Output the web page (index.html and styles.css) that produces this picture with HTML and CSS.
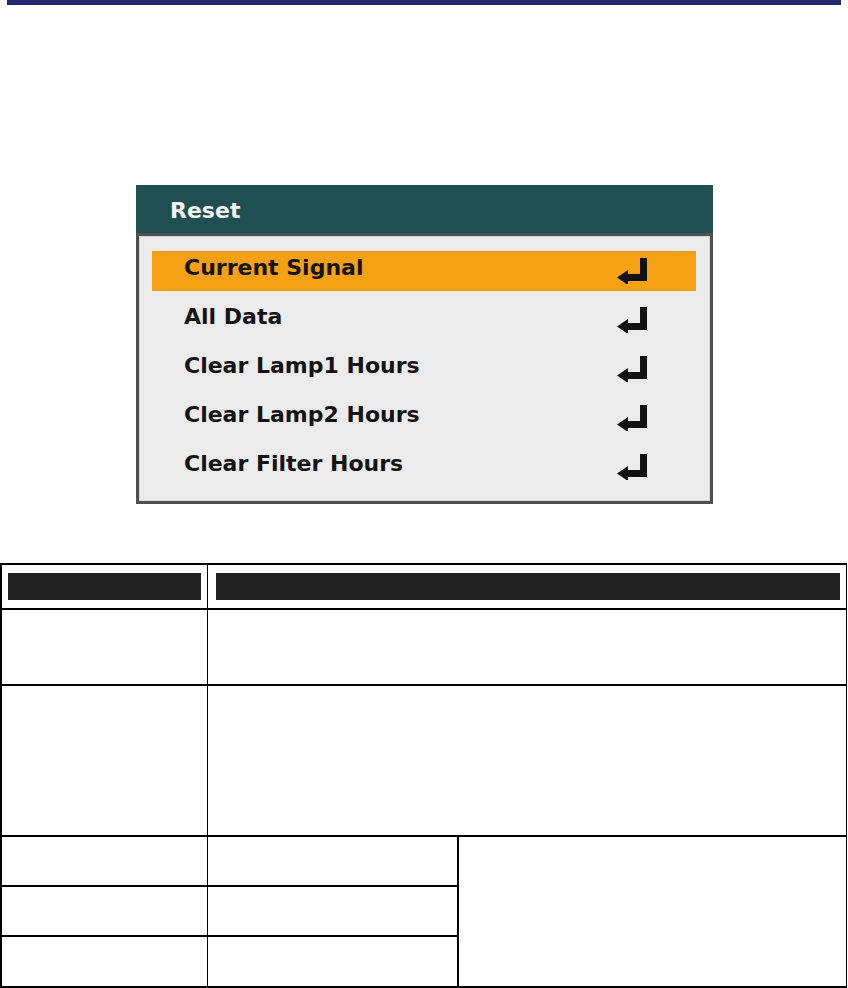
FILE: index.html
```html
<!DOCTYPE html>
<html>
<head>
<meta charset="utf-8">
<link rel="stylesheet" href="styles.css">
</head>
<body>
<div class="topbar"></div>
<div class="figure">
  <div class="osd">
    <div class="osd-head">Reset</div>
    <div class="osd-body">
      <div class="row active"><span class="label">Current Signal</span><svg class="enter" viewBox="0 0 30 26"><rect x="23" y="0" width="7" height="23"/><rect x="9" y="16" width="21" height="7"/><polygon points="0,19.5 11,12 11,27"/></svg></div>
      <div class="row"><span class="label">All Data</span><svg class="enter" viewBox="0 0 30 26"><rect x="23" y="0" width="7" height="23"/><rect x="9" y="16" width="21" height="7"/><polygon points="0,19.5 11,12 11,27"/></svg></div>
      <div class="row"><span class="label">Clear Lamp1 Hours</span><svg class="enter" viewBox="0 0 30 26"><rect x="23" y="0" width="7" height="23"/><rect x="9" y="16" width="21" height="7"/><polygon points="0,19.5 11,12 11,27"/></svg></div>
      <div class="row"><span class="label">Clear Lamp2 Hours</span><svg class="enter" viewBox="0 0 30 26"><rect x="23" y="0" width="7" height="23"/><rect x="9" y="16" width="21" height="7"/><polygon points="0,19.5 11,12 11,27"/></svg></div>
      <div class="row"><span class="label">Clear Filter Hours</span><svg class="enter" viewBox="0 0 30 26"><rect x="23" y="0" width="7" height="23"/><rect x="9" y="16" width="21" height="7"/><polygon points="0,19.5 11,12 11,27"/></svg></div>
    </div>
  </div>
</div>
<div class="tbl">
  <div class="cell c1 head"><div class="hbox"></div></div>
  <div class="cell span head head2"><div class="hbox"></div></div>
  <div class="cell c1"></div>
  <div class="cell span"></div>
  <div class="cell c1"></div>
  <div class="cell span"></div>
  <div class="cell c1"></div>
  <div class="cell c2"></div>
  <div class="cell c3"></div>
  <div class="cell c1"></div>
  <div class="cell c2"></div>
  <div class="cell c1"></div>
  <div class="cell c2"></div>
</div>
</body>
</html>
```
FILE: styles.css
```css
html, body {
  margin: 0;
  padding: 0;
  background: #ffffff;
}
body {
  font-family: "DejaVu Sans", "Liberation Sans", sans-serif;
}
.topbar {
  height: 5px;
  margin: 0 7px;
  background: #23286a;
}
.figure {
  padding: 180px 0 0 136px;
}
.osd {
  width: 577px;
}
.osd-head {
  background: #1f4f50;
  color: #f2f2f2;
  font-weight: bold;
  font-size: 22px;
  height: 48px;
  box-sizing: border-box;
  padding: 3px 0 0 34px;
  line-height: 45px;
}
.osd-body {
  background: #ebebeb;
  border: 3px solid #4f4f4f;
  box-shadow: inset 0 0 0 1px #d6d6d6;
  padding: 15px 14px 14px 13px;
  display: flex;
  flex-direction: column;
  gap: 9px;
}
.row {
  height: 40px;
  box-sizing: border-box;
  display: flex;
  justify-content: space-between;
  align-items: flex-start;
  padding: 0 49px 0 32px;
  color: #141414;
  font-weight: bold;
  font-size: 22px;
}
.row.active {
  background: #f5a113;
}
.label {
  line-height: 34px;
}
.enter {
  width: 30px;
  height: 26px;
  margin-top: 7px;
  fill: #111111;
}
.tbl {
  margin-top: 59px;
  width: 847px;
  box-sizing: border-box;
  border: 2px solid #000;
  background: #000;
  display: grid;
  grid-template-columns: 205px 249px 388px;
  grid-template-rows: 43px 74px 149px 48px 48px 49px;
  column-gap: 1px;
  row-gap: 2px;
}
.cell {
  background: #ffffff;
}
.span {
  grid-column: 2 / 4;
}
.c3 {
  grid-column: 3;
  grid-row: 4 / 7;
  border-left: 1px solid #000;
}
.head {
  padding: 8px 6px;
  box-sizing: border-box;
}
.head2 {
  padding: 8px 6px 8px 8px;
}
.hbox {
  height: 100%;
  background: #222222;
}
```
